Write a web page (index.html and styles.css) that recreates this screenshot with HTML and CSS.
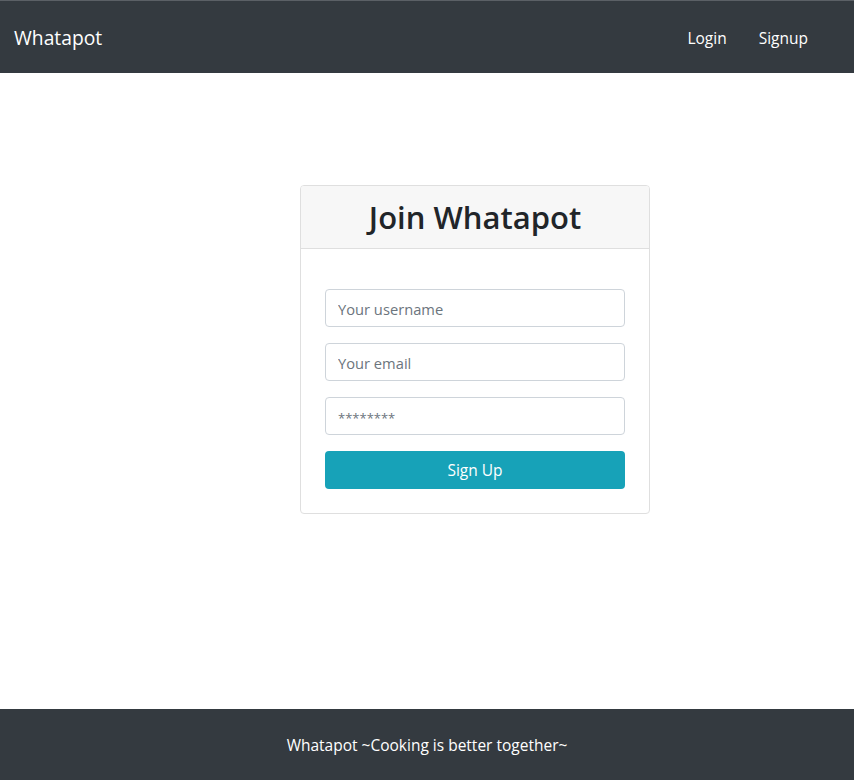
FILE: index.html
```html
<!DOCTYPE html>
<html>
<head>
<meta charset="utf-8">
<link rel="stylesheet" href="styles.css">
</head>
<body>
<nav class="navbar">
  <a class="brand" href="#">Whatapot</a>
  <ul class="nav">
    <li><a href="#">Login</a></li>
    <li><a href="#">Signup</a></li>
  </ul>
</nav>
<main class="main">
  <div class="card">
    <div class="card-header"><h2>Join Whatapot</h2></div>
    <div class="card-body">
      <form class="form">
        <input class="input" type="text" placeholder="Your username">
        <input class="input" type="email" placeholder="Your email">
        <input class="input pw" type="text" placeholder="********">
        <button class="btn" type="button">Sign Up</button>
      </form>
    </div>
  </div>
</main>
<footer class="footer">Whatapot ~Cooking is better together~</footer>
</body>
</html>
```
FILE: styles.css
```css
* { box-sizing: border-box; }
html, body { margin: 0; padding: 0; }
body {
  font-family: "Open Sans", "Noto Sans", sans-serif;
  font-size: 16px;
  color: #212529;
  background: #fff;
  height: 780px;
  display: flex;
  flex-direction: column;
}
.navbar {
  height: 73px;
  background: #343a40;
  border-top: 1px solid #5b6066;
  display: flex;
  align-items: center;
  justify-content: space-between;
  padding: 1px 14px 0 14px;
}
.brand {
  color: #fff;
  text-decoration: none;
  font-size: 19.3px;
}
.nav {
  list-style: none;
  margin: 0;
  padding: 0 32px 0 0;
  display: flex;
  gap: 32px;
}
.nav a {
  color: #fff;
  text-decoration: none;
  font-size: 15.5px;
}
.main {
  flex: 1;
  padding-top: 112px;
  padding-left: 300px;
}
.card {
  width: 350px;
  border: 1px solid #dfdfdf;
  border-radius: 4px;
  overflow: hidden;
}
.card-header {
  background: #f7f7f7;
  border-bottom: 1px solid #dfdfdf;
  height: 63px;
  display: flex;
  align-items: center;
  justify-content: center;
}
.card-header h2 {
  margin: 0;
  font-size: 31px;
  font-weight: 600;
  color: #212529;
}
.card-body {
  padding: 40px 24px 24px 24px;
}
.form {
  display: flex;
  flex-direction: column;
  gap: 16px;
}
.input {
  height: 38px;
  width: 100%;
  border: 1px solid #ced4da;
  border-radius: 4px;
  padding: 1px 12px 0 12px;
  font-family: inherit;
  font-size: 14.7px;
  color: #495057;
}
.input::placeholder { color: #6c757d; }
.pw::placeholder { font-size: 13px; }
.btn {
  height: 38px;
  width: 100%;
  border: none;
  border-radius: 4px;
  background: #17a2b8;
  color: #fff;
  font-family: inherit;
  font-size: 15.5px;
  padding-top: 1px;
}
.footer {
  height: 71px;
  background: #343a40;
  color: #fff;
  display: flex;
  align-items: center;
  justify-content: center;
  font-size: 15.5px;
}
```
